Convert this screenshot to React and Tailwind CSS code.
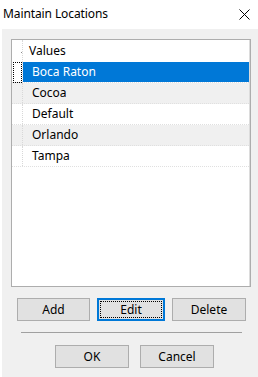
import React from 'react';

const rows = ['Boca Raton', 'Cocoa', 'Default', 'Orlando', 'Tampa'];

const Btn = ({ label, w, focused }) => (
  <button
    className={
      focused
        ? 'h-[23px] border-2 border-[#0078d7] bg-[#e1e1e1] p-[1px] text-[12px] text-black ' + w
        : 'h-[23px] border border-[#adadad] bg-[#e1e1e1] text-[12px] text-black ' + w
    }
  >
    {focused ? (
      <span className="flex h-full w-full items-center justify-center border border-dotted border-black">{label}</span>
    ) : (
      label
    )}
  </button>
);

export default function App() {
  return (
    <div className="flex h-[377px] w-[258px] flex-col bg-white font-['Noto_Sans',sans-serif] text-[12px] leading-none text-black">
      {/* Title bar */}
      <div className="flex h-[29px] items-center justify-between pl-[3px] pr-[8px]">
        <span className="pb-[2px] tracking-[-0.1px]">Maintain Locations</span>
        <svg width="11" height="11" viewBox="0 0 11 11" className="mb-[1px]">
          <path d="M0.5 0.5 L10.5 10.5 M10.5 0.5 L0.5 10.5" stroke="#000" strokeWidth="1" fill="none" />
        </svg>
      </div>

      {/* Body */}
      <div className="ml-[2px] flex flex-1 flex-col bg-[#f0f0f0] pt-[10px]">
        <div className="ml-[9px] h-[248px] w-[240px] border border-[#adadad] bg-white">
          <div className="h-full border-r border-[#dcdcdc]">
            <div className="flex h-[22px]">
              <div className="relative w-[11px] border-r border-dotted border-[#d8d8d8]">
                <div className="absolute left-[9px] top-[12px] h-px w-[1px] bg-[#8a8a8a]" />
              </div>
              <div className="flex items-center pl-[6px]">Values</div>
            </div>
            {rows.map((r, i) => {
              const sel = i === 0;
              const alt = i % 2 === 1;
              return (
                <div
                  key={r}
                  className={'flex h-[21px] border-b border-dotted border-[#e0e0e0] ' + (alt ? 'bg-[#f0f0f0]' : 'bg-white')}
                >
                  <div className="flex w-[11px] border-r border-dotted border-[#d8d8d8] pl-[1px]">
                    {sel && <div className="h-[21px] w-[9px] border border-dotted border-black" />}
                  </div>
                  <div
                    className={
                      'flex flex-1 items-center pl-[9px] ' + (sel ? 'bg-[#0078d7] text-white' : '')
                    }
                  >
                    {r}
                  </div>
                </div>
              );
            })}
          </div>
        </div>

        <div className="ml-[15px] mt-[11px] flex gap-[7px]">
          <Btn label="Add" w="w-[73px]" />
          <Btn label="Edit" w="w-[68px]" focused />
          <Btn label="Delete" w="w-[74px]" />
        </div>

        <div className="ml-[19px] mt-[11px] h-px w-[221px] bg-[#a0a0a0]" />

        <div className="ml-[53px] mt-[12px] flex gap-[11px]">
          <Btn label="OK" w="w-[74px]" />
          <Btn label="Cancel" w="w-[74px]" />
        </div>
      </div>
    </div>
  );
}
